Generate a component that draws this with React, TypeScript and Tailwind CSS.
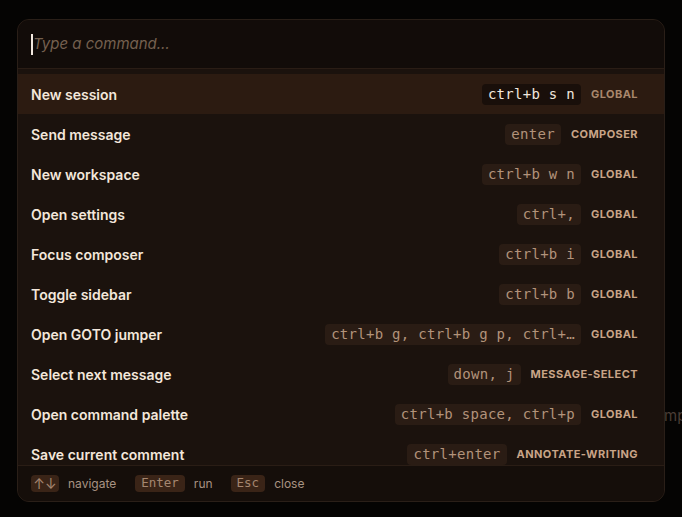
import React from "react";

const rows: { label: string; keys: string; scope: string }[] = [
  { label: "New session", keys: "ctrl+b s n", scope: "GLOBAL" },
  { label: "Send message", keys: "enter", scope: "COMPOSER" },
  { label: "New workspace", keys: "ctrl+b w n", scope: "GLOBAL" },
  { label: "Open settings", keys: "ctrl+,", scope: "GLOBAL" },
  { label: "Focus composer", keys: "ctrl+b i", scope: "GLOBAL" },
  { label: "Toggle sidebar", keys: "ctrl+b b", scope: "GLOBAL" },
  { label: "Open GOTO jumper", keys: "ctrl+b g, ctrl+b g p, ctrl+…", scope: "GLOBAL" },
  { label: "Select next message", keys: "down, j", scope: "MESSAGE-SELECT" },
  { label: "Open command palette", keys: "ctrl+b space, ctrl+p", scope: "GLOBAL" },
  { label: "Save current comment", keys: "ctrl+enter", scope: "ANNOTATE-WRITING" },
];

const sans = { fontFamily: "Inter, 'Noto Sans', sans-serif" };
const mono = { fontFamily: "'DejaVu Sans Mono', 'Liberation Mono', monospace" };

export default function App() {
  return (
    <div className="relative w-[682px] h-[517px] bg-[#050403] overflow-hidden" style={sans}>
      <div className="absolute left-[664px] top-[405px] text-[15px] text-[#4a3d35]">mp</div>
      <div className="absolute left-[17px] top-[19px] w-[648px] h-[483px] rounded-[12px] border border-[#2a1f18] bg-[#1b120d] overflow-hidden flex flex-col">
        <div className="h-[49px] shrink-0 bg-[#120c09] border-b border-[#2a1d15] flex items-center pl-[13px]">
          <div className="w-[2px] h-[21px] bg-[#f2e8df]" />
          <span className="italic text-[15px] text-[#75604f]">Type a command…</span>
        </div>
        <div className="flex-1 overflow-hidden pt-[5px]">
          {rows.map((r, i) => {
            const sel = i === 0;
            return (
              <div
                key={r.label}
                className={`h-[40px] flex items-center pl-[13px] pr-[26px] ${sel ? "bg-[#2c1b11]" : ""}`}
              >
                <span className="flex-1 text-[14px] font-semibold text-[#f3e7db]">{r.label}</span>
                <span
                  className={`h-[21px] px-[6px] rounded-[4px] flex items-center text-[14px] tracking-[0.02em] ${
                    sel ? "bg-[#190f0a] text-[#f2e8de]" : "bg-[#2a1c14] text-[#b2937b]"
                  }`}
                  style={mono}
                >
                  {r.keys}
                </span>
                <span
                  className={`ml-[10px] text-[11px] font-bold tracking-[0.04em] ${
                    sel ? "text-[#a9876c]" : "text-[#c9a487]"
                  }`}
                >
                  {r.scope}
                </span>
              </div>
            );
          })}
        </div>
        <div className="h-[36px] shrink-0 bg-[#150e0a] border-t border-[#2a1d15] flex items-center pl-[13px] text-[12px] text-[#a89383]">
          <span className="h-[17px] w-[28px] justify-center rounded-[4px] bg-[#3a2417] text-[#a58670] flex items-center text-[14px]" style={sans}>↑↓</span>
          <span className="ml-[9px]">navigate</span>
          <span className="ml-[19px] h-[17px] px-[6px] rounded-[4px] bg-[#3a2417] text-[#a58670] flex items-center text-[12.5px]" style={mono}>Enter</span>
          <span className="ml-[9px]">run</span>
          <span className="ml-[18px] h-[17px] px-[6px] rounded-[4px] bg-[#3a2417] text-[#a58670] flex items-center text-[12.5px]" style={mono}>Esc</span>
          <span className="ml-[9px]">close</span>
        </div>
      </div>
    </div>
  );
}
